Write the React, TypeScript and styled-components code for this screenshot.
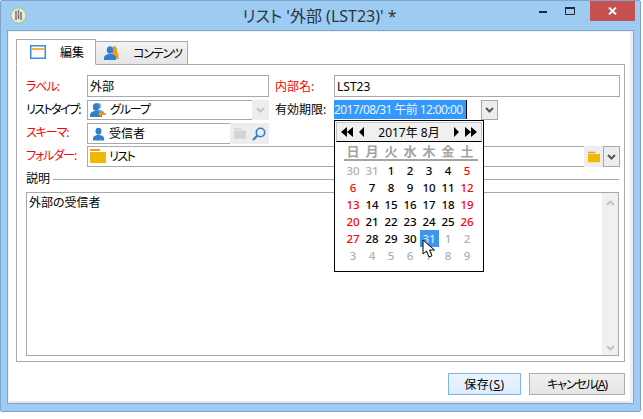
import React from 'react';
import styled, { createGlobalStyle } from 'styled-components';

const Global = createGlobalStyle`
  html, body { margin: 0; background: #fff; }
  body { font-family: "Noto Sans", "Noto Sans CJK JP", sans-serif; font-size: 12px; color: #000; font-feature-settings: "palt"; }
  * { box-sizing: border-box; }
`;

const Window = styled.div`
  width: 641px; height: 412px; background: #9ecbf2; border: 1px solid #7fa4c9; border-radius: 2px;
  padding: 0 6px 7px; display: flex; flex-direction: column;
`;
const TitleBar = styled.div`
  height: 29px; display: flex; align-items: flex-start; position: relative; margin: 0 -1px 0 0;
`;
const AppIcon = styled.svg`width: 17px; height: 17px; margin: 6px 0 0 3px; flex: none;`;
const Title = styled.div`
  flex: 1; text-align: center; font-size: 16px; line-height: 20px; margin-top: 5px; color: #2b3540; padding-left: 82px; white-space: nowrap;
`;
const Controls = styled.div`display: flex; align-items: flex-start; flex: none;`;
const Control = styled.div`
  width: 26px; height: 20px; display: flex; align-items: center; justify-content: center; margin-right: 1px;
`;
const CloseControl = styled.div`
  width: 45px; height: 20px; background: #c75050; display: flex; align-items: center; justify-content: center; margin-left: 6px;
`;
const Client = styled.div`
  flex: 1; background: #fff; border: 1px solid #7fa4c9; box-shadow: inset 1px 0 #f0f0f0, inset -3px 0 #f0f0f0, inset 0 -2px #e6e6e6, inset 0 1px #f0f0f0;
  padding: 8px 8px 0; display: flex; flex-direction: column;
`;
const Tabs = styled.div`display: flex; height: 26px; align-items: flex-end; margin-bottom: -1px; position: relative; z-index: 1;`;
const Tab = styled.div<{ $active?: boolean; $w: number }>`
  width: ${p => p.$w}px; height: ${p => (p.$active ? 26 : 24)}px;
  border: 1px solid #a9a9a9; border-left-width: ${p => (p.$active ? 1 : 0)}px;
  border-bottom-color: ${p => (p.$active ? '#fff' : '#a9a9a9')};
  background: ${p => (p.$active ? '#fff' : 'linear-gradient(#f3f3f3, #e5e5e5)')};
  display: flex; align-items: center; padding-left: ${p => (p.$active ? 13 : 8)}px;
`;
const TabIcon = styled.svg`width: 16px; height: 16px; flex: none;`;
const TabLabel = styled.span<{ $gap: number; $track?: number }>`
  margin-left: ${p => p.$gap}px; font-size: 12px; white-space: nowrap; letter-spacing: ${p => p.$track ?? 0}px;
`;
const Panel = styled.div`
  width: 609px; height: 298px; border: 1px solid #a9a9a9; padding: 10px 4px 0 9px; background: #fff;
`;
const FormRow = styled.div<{ $h: number; $mt: number }>`
  display: flex; height: ${p => p.$h}px; margin-top: ${p => p.$mt}px; align-items: stretch;
`;
const Label = styled.div<{ $req?: boolean; $w: number; $track?: number; $lift?: number }>`
  width: ${p => p.$w}px; flex: none; color: ${p => (p.$req ? '#f00' : '#000')}; line-height: 17px; white-space: nowrap; align-self: center;
  letter-spacing: ${p => p.$track ?? 0}px; padding-bottom: ${p => (p.$lift ?? 0) * 2}px;
`;
const Field = styled.div<{ $w?: number }>`
  ${p => (p.$w ? `width: ${p.$w}px; flex: none;` : 'flex: 1;')}
  border: 1px solid #a9a9a9; background: #fff; display: flex; align-items: center; padding-left: 2px; min-width: 0;
`;
const FieldText = styled.span<{ $ml?: number; $track?: number; $lift?: number }>`
  margin-left: ${p => p.$ml ?? 0}px; flex: 1; white-space: nowrap; font-size: 12px; letter-spacing: ${p => p.$track ?? 0}px;
  padding-bottom: ${p => (p.$lift ?? 0) * 2}px;
`;
const Gap = styled.div<{ $w: number }>`width: ${p => p.$w}px; flex: none;`;
const Icon = styled.svg`flex: none;`;
const FolderIcon = styled.svg<{ $lift?: number }>`flex: none; margin-bottom: ${p => (p.$lift ?? 0) * 2}px;`;
const Btn = styled.div<{ $w: number; $bordered?: boolean }>`
  width: ${p => p.$w}px; flex: none; align-self: stretch; margin: -1px -1px -1px 0; background: #ededed;
  border: ${p => (p.$bordered ? '1px solid #a9a9a9' : '0')}; display: flex; align-items: center; justify-content: center;
`;
const DateWrap = styled.div`
  width: 164px; display: flex; position: relative; flex: none;
`;
const Selected = styled.div`
  width: 133px; background: #3399ff; color: #e8f3ff; line-height: 19px; border-right: 1px solid #000; white-space: nowrap; font-size: 12px; height: 19px;
  letter-spacing: -0.6px; overflow: hidden;
`;
const DateRest = styled.div`flex: 1;`;
const DateBtn = styled.div`
  width: 17px; height: 20px; background: #ededed; border: 1px solid #a9a9a9; display: flex; align-items: center; justify-content: center;
`;
const Popup = styled.div`
  position: absolute; top: 20px; left: 0; width: 150px; height: 152px; background: #fff; border: 1px solid #000; z-index: 3; padding: 0 1px;
`;
const CalHeader = styled.div`
  height: 20px; margin-top: 1px; background: #f0f0f0; border: 1px solid #c4c4c4; border-bottom: 1px solid #000; display: flex; align-items: center; padding: 0 4px;
  margin-left: 0; justify-content: space-between;
`;
const CalArrows = styled.svg`flex: none;`;
const CalTitle = styled.div`font-size: 12px; white-space: nowrap;`;
const Week = styled.div`
  display: grid; grid-template-columns: repeat(7, 19px); margin: 0 0 0 7.5px; width: 134px; height: 19px; border-bottom: 2px solid #a3a3a3; font-size: 13px;
  font-weight: 700; color: #a3a3a3; text-align: center; line-height: 18px;
`;
const Days = styled.div`
  display: grid; grid-template-columns: repeat(7, 19px); grid-auto-rows: 17px; margin: 1px 0 0 7.5px; text-align: center;
`;
const Day = styled.div<{ $c: string; $sel?: boolean }>`
  color: ${p => (p.$sel ? '#cfe6ff' : p.$c)}; background: ${p => (p.$sel ? '#3d95ee' : 'transparent')}; line-height: 17px; font-size: 11.5px; font-weight: 500;
`;
const Cursor = styled.svg`position: absolute; left: 88px; top: 139px; z-index: 4;`;
const Group = styled.div`display: flex; align-items: center; height: 14px; margin-top: 5px;`;
const GroupLabel = styled.div`font-size: 12px; width: 27px; flex: none; line-height: 14px;`;
const GroupLine = styled.div`flex: 1; height: 1px; background: #a9a9a9; margin-right: 1px;`;
const TextArea = styled.div`
  margin-top: 6px; width: 593px; height: 164px; border: 1px solid #a9a9a9; display: flex; background: #fff;
`;
const AreaText = styled.div`flex: 1; padding: 2px 0 0 2px; font-size: 12px; line-height: 16px;`;
const ScrollBar = styled.div`
  width: 16px; background: #f0f0f0; display: flex; flex-direction: column; justify-content: space-between; align-items: center; padding: 7px 0 4px;
`;
const Footer = styled.div`display: flex; justify-content: flex-start; margin: 11px 0 0 432px; gap: 8px;`;
const Button = styled.div<{ $primary?: boolean; $w: number; $track?: number }>`
  width: ${p => p.$w}px; height: 22px; border: 1px solid ${p => (p.$primary ? '#7eb4ea' : '#acacac')};
  background: ${p => (p.$primary ? 'linear-gradient(#ecf4fc, #dcecfc)' : 'linear-gradient(#f0f0f0, #e5e5e5)')};
  display: flex; align-items: center; justify-content: center; font-size: 12px; white-space: nowrap; letter-spacing: ${p => p.$track ?? 0}px;
`;
const Mnemonic = styled.span`text-decoration: underline;`;

const Chevron = ({ color, up }: { color: string; up?: boolean }) => (
  <Icon width="9" height="6" viewBox="0 0 9 6">
    <path d={up ? 'M1 5L4.5 1.5L8 5' : 'M1 1L4.5 4.5L8 1'} fill="none" stroke={color} strokeWidth="2" />
  </Icon>
);
const Folder = ({ w, h, body, tab, lift }: { w: number; h: number; body: string; tab: string; lift?: number }) => (
  <FolderIcon $lift={lift} width={w} height={h} viewBox="0 0 16 14">
    <path d="M0 0H10V2H0Z" fill={tab} />
    <path d="M0 3H16V14H0Z" fill={body} />
  </FolderIcon>
);
const Person = ({ color }: { color: string }) => (
  <>
    <ellipse cx="6" cy="4" rx="3.2" ry="3.8" fill={color} />
    <path d="M0 14V11.5C0 9.5 2.5 8.6 4.5 8H7.5C9.5 8.6 12 9.5 12 11.5V14Z" fill={color} />
  </>
);

const week = ['日', '月', '火', '水', '木', '金', '土'];
const gray = '#b0b0b0';
const red = '#f00';
type D = { t: number; m: boolean };
const days: D[] = [
  ...[30, 31].map(t => ({ t, m: false })),
  ...Array.from({ length: 31 }, (_, i) => ({ t: i + 1, m: true })),
  ...[1, 2, 3, 4, 5, 6, 7, 8, 9].map(t => ({ t, m: false })),
];

export default function App() {
  return (
    <>
      <Global />
      <Window>
        <TitleBar>
          <AppIcon viewBox="0 0 17 17">
            <circle cx="8.5" cy="8.5" r="7.6" fill="#e8e8e0" stroke="#9ccb6a" strokeWidth="1" />
            <path d="M6 4V13M8.5 3V12M11 5V13" stroke="#6b6b6b" strokeWidth="1.4" fill="none" />
            <path d="M5 9L9 7" stroke="#aaa" strokeWidth="1" />
          </AppIcon>
          <Title>リスト '外部 (LST23)' *</Title>
          <Controls>
            <Control>
              <Icon width="8" height="3" viewBox="0 0 8 3"><rect width="8" height="2" y="1" fill="#1f2a35" /></Icon>
            </Control>
            <Control>
              <Icon width="10" height="8" viewBox="0 0 10 8"><path d="M0.5 1.5H9.5V7.5H0.5Z" fill="none" stroke="#1f2a35" /><rect width="10" height="2" fill="#1f2a35" /></Icon>
            </Control>
            <CloseControl>
              <Icon width="9" height="8" viewBox="0 0 9 8"><path d="M1 0.5L8 7.5M8 0.5L1 7.5" stroke="#fff" strokeWidth="1.8" /></Icon>
            </CloseControl>
          </Controls>
        </TitleBar>
        <Client>
          <Tabs>
            <Tab $active $w={80}>
              <TabIcon viewBox="0 0 16 16">
                <rect x="0.75" y="1.75" width="14.5" height="12.5" fill="#fff" stroke="#3f8ad2" strokeWidth="1.5" />
                <rect x="2" y="4" width="12" height="2" fill="#f2b544" />
              </TabIcon>
              <TabLabel $gap={14}>編集</TabLabel>
            </Tab>
            <Tab $w={92}>
              <TabIcon viewBox="0 0 16 16">
                <g transform="translate(6 1)"><path d="M3 0C6 0 7.5 2 7 5L8.5 9.5V13H1.5V8L2 6Z" fill="#f09a2e" /></g>
                <g transform="translate(0 1)"><Person color="#2f7fcb" /></g>
              </TabIcon>
              <TabLabel $gap={13} $track={-1.2}>コンテンツ</TabLabel>
            </Tab>
          </Tabs>
          <Panel>
            <FormRow $h={22} $mt={0}>
              <Label $req $w={61} $track={-1}>ラベル:</Label>
              <Field $w={182}><FieldText>外部</FieldText></Field>
              <Gap $w={6} />
              <Label $req $w={59}>内部名:</Label>
              <Field $w={286}><FieldText>LST23</FieldText></Field>
            </FormRow>
            <FormRow $h={20} $mt={3}>
              <Label $w={61} $track={-1.6} $lift={1}>リストタイプ:</Label>
              <Field $w={182}>
                <Icon width="16" height="16" viewBox="0 0 16 16">
                  <g transform="translate(5 0)"><path d="M3 1A3 3 0 1 1 3 7A3 3 0 1 1 3 1ZM0 8H6L9 10V13H0Z" fill="#6ba4dc" /></g>
                  <g transform="translate(0 1)"><Person color="#2f7fcb" /></g>
                  <path d="M8 12L11 9V11H16V13H11V15Z" fill="#f09a2e" />
                </Icon>
                <FieldText $ml={4} $track={-1.1} $lift={1}>グループ</FieldText>
                <Btn $w={17}><Chevron color="#c4c4c4" /></Btn>
              </Field>
              <Gap $w={6} />
              <Label $w={59} $lift={1}>有効期限:</Label>
              <DateWrap>
                <Selected>2017/08/31 午前 12:00:00</Selected>
                <DateRest />
                <DateBtn><Chevron color="#555" /></DateBtn>
                <Popup>
                  <CalHeader>
                    <CalArrows width="27" height="10" viewBox="0 0 27 10">
                      <path d="M6 0V10L0 5ZM12 0V10L6 5ZM23 0V10L18 5Z" fill="#000" />
                    </CalArrows>
                    <CalTitle>2017年 8月</CalTitle>
                    <CalArrows width="27" height="10" viewBox="0 0 27 10">
                      <path d="M4 0V10L9 5ZM15 0V10L21 5ZM21 0V10L27 5Z" fill="#000" />
                    </CalArrows>
                  </CalHeader>
                  <Week>{week.map(w => <div key={w}>{w}</div>)}</Week>
                  <Days>
                    {days.map((d, i) => {
                      const col = i % 7;
                      const c = !d.m ? gray : col === 0 || col === 6 ? red : '#000';
                      return <Day key={i} $c={c} $sel={d.m && d.t === 31}>{d.t}</Day>;
                    })}
                  </Days>
                </Popup>
                <Cursor width="15" height="19" viewBox="0 0 15 19">
                  <path d="M1 1V15L4.5 12L7 18L10 16.7L7.5 11H12.5Z" fill="#fff" stroke="#000" strokeWidth="1" />
                </Cursor>
              </DateWrap>
            </FormRow>
            <FormRow $h={21} $mt={3}>
              <Label $req $w={61} $track={-1.1} $lift={1}>スキーマ:</Label>
              <Field $w={182}>
                <Gap $w={3} />
                <Icon width="11" height="14" viewBox="0 0 12 14"><Person color="#2f7fcb" /></Icon>
                <FieldText $ml={5} $lift={1}>受信者</FieldText>
                <Btn $w={20}><Folder w={12} h={11} body="#d4d4d4" tab="#d4d4d4" /></Btn>
                <Btn $w={20}>
                  <Icon width="14" height="14" viewBox="0 0 14 14">
                    <circle cx="8.5" cy="5.5" r="4.2" fill="none" stroke="#2f7fcb" strokeWidth="1.6" />
                    <path d="M5.5 8.5L1 13" stroke="#2f7fcb" strokeWidth="2.2" />
                  </Icon>
                </Btn>
              </Field>
            </FormRow>
            <FormRow $h={21} $mt={2}>
              <Label $req $w={61} $track={-1.1} $lift={1}>フォルダー:</Label>
              <Field>
                <Folder w={16} h={14} body="#f0b800" tab="#f09a2e" lift={1} />
                <FieldText $ml={3} $track={-1.5} $lift={1}>リスト</FieldText>
                <Btn $w={20}><Folder w={12} h={12} body="#f0b800" tab="#f09a2e" /></Btn>
                <Btn $w={17} $bordered><Chevron color="#555" /></Btn>
              </Field>
            </FormRow>
            <Group>
              <GroupLabel>説明</GroupLabel>
              <GroupLine />
            </Group>
            <TextArea>
              <AreaText>外部の受信者</AreaText>
              <ScrollBar>
                <Chevron color="#c4c4c4" up />
                <Chevron color="#c4c4c4" />
              </ScrollBar>
            </TextArea>
          </Panel>
          <Footer>
            <Button $primary $w={73} $track={0.5}>保存(<Mnemonic>S</Mnemonic>)</Button>
            <Button $w={96} $track={-1.2}>キャンセル(<Mnemonic>A</Mnemonic>)</Button>
          </Footer>
        </Client>
      </Window>
    </>
  );
}
